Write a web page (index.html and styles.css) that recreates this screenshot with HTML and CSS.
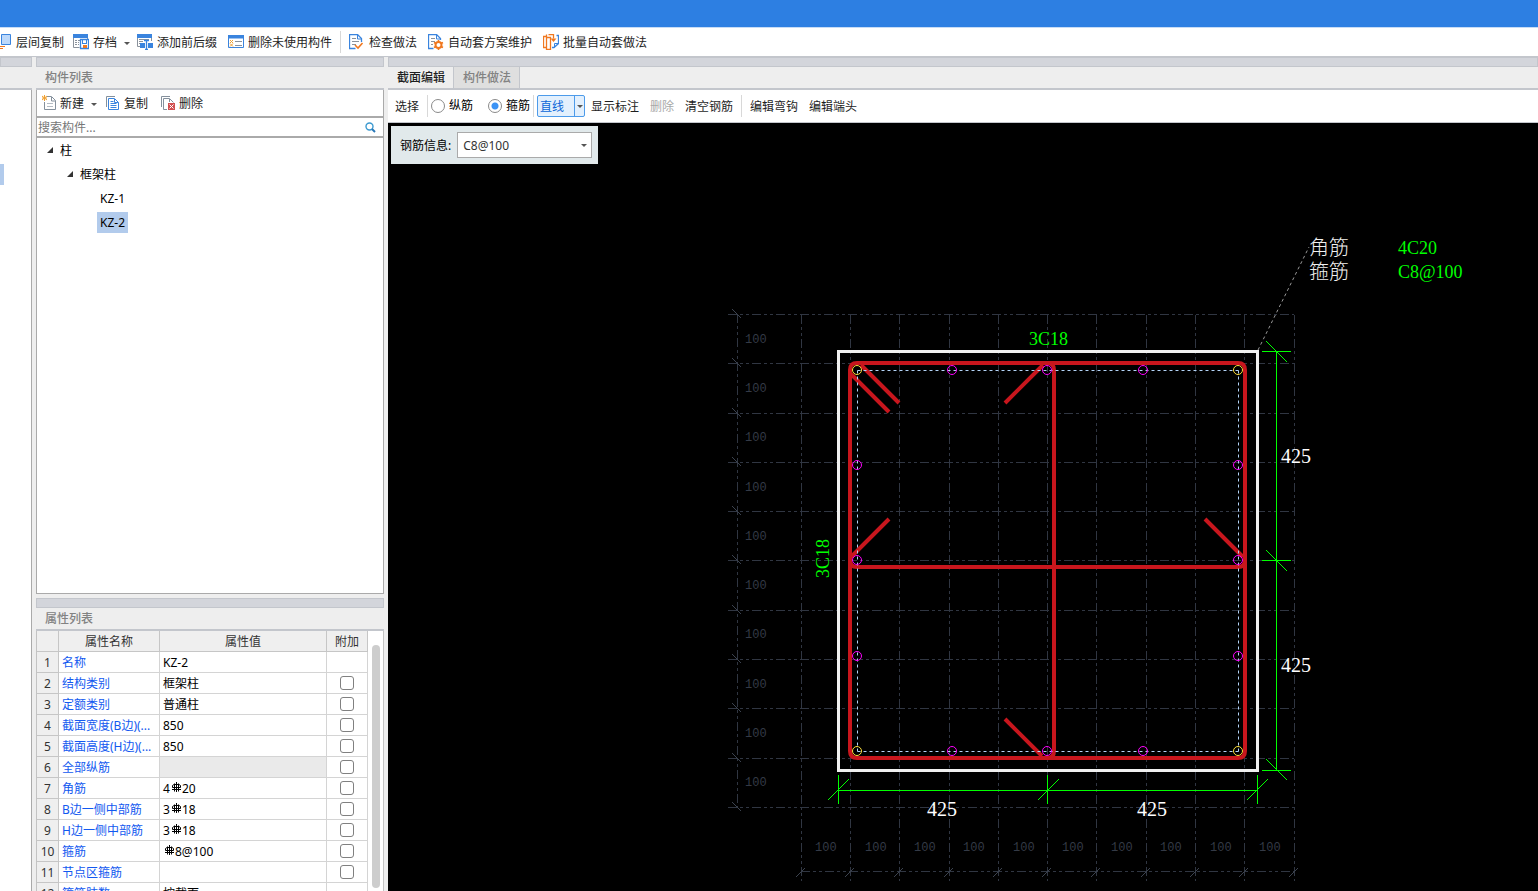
FILE: index.html
```html
<!DOCTYPE html>
<html lang="zh-CN">
<head>
    <meta charset="UTF-8">
    <meta name="viewport" content="width=device-width, initial-scale=1.0">
    <title>截面编辑</title>
    <link rel="stylesheet" href="styles.css">
</head>
<body>

    <header class="title-bar"></header>

    <nav class="main-toolbar">
        <button type="button" class="tool first">
            <svg width="12" height="16" viewBox="0 0 12 16"><path d="M1.500.5h9v10h-9z" fill="#bcd8fa" stroke="#3a84de"/><path d="M0 12.500h5M0 14.500h3" stroke="#f07820"/></svg>
            层间复制
        </button>
        <button type="button" class="tool has-arrow">
            <svg width="16" height="16" viewBox="0 0 16 16"><path d="M.5 1v12.500h6" fill="none" stroke="#8a929c"/><path d="M0 0h15v4H0z" fill="#3a84de"/><path d="M2 6.500h2M5 6.500h2M2 8.500h2M5 8.500h1M2 10.500h2M5 10.500h1M14.500 4v1" stroke="#8a929c"/><path d="M7.500 5.500h8v9h-8z" fill="#fff" stroke="#3a84de" stroke-width="1.300"/><path d="M9 9.500h5M9.500 6v3M13.500 6v3" stroke="#3a84de"/><path d="M10 11h4v3h-4z" fill="#f07820"/></svg>
            存档
            <span class="arrow"></span>
        </button>
        <button type="button" class="tool">
            <svg width="16" height="16" viewBox="0 0 16 16"><path d="M.5 3v9.500h3M14.500 3v4" fill="none" stroke="#8a929c"/><path d="M0 0h15v4H0z" fill="#3a84de"/><path d="M2 5.500h10M2 7.500h4M2 9.500h1" stroke="#8a929c"/><path d="M3 9h5v5H3zM11 9h5v5h-5z" fill="#3a84de"/><path d="M7 6.500h5M9.500 6v10M8 15.500h3" stroke="#3a84de" stroke-width="1.300"/></svg>
            添加前后缀
        </button>
        <button type="button" class="tool">
            <svg width="16" height="16" viewBox="0 0 16 16"><path d="M.5 1.500h15v12H.5z" fill="#fff" stroke="#3a84de"/><path d="M0 1h16v3.500H0z" fill="#3a84de"/><path d="M2 6l3 3M5 6L2 9M2 9.500l3 3M5 9.500l-3 3" stroke="#f0a030"/><path d="M7 7.500h7M7 11.500h7" stroke="#8a929c"/></svg>
            删除未使用构件
        </button>
        <span class="divider"></span>
        <button type="button" class="tool">
            <svg width="16" height="16" viewBox="0 0 16 16"><path d="M12.500 8V4.500l-4-4h-8v14h6" fill="none" stroke="#3a84de" stroke-width="1.300"/><path d="M8.500 1v4h4" fill="none" stroke="#3a84de"/><path d="M3 4.500h4M3 7.500h7M3 10.500h4" stroke="#8a929c"/><path d="M6 11l3 3 4.500-5" fill="none" stroke="#f07820" stroke-width="1.600"/></svg>
            检查做法
        </button>
        <button type="button" class="tool">
            <svg width="16" height="16" viewBox="0 0 16 16"><path d="M12.500 6V4.500l-4-4h-8v14h5" fill="none" stroke="#3a84de" stroke-width="1.300"/><path d="M8.500 1v4h4" fill="none" stroke="#3a84de"/><path d="M3 4.500h4M3 7.500h4M3 10.500h2" stroke="#8a929c"/><circle cx="10.500" cy="11" r="3" fill="#fff" stroke="#f07820" stroke-width="2"/><path d="M10.500 6v2M10.500 14v2M6 8.500l2 1M13 12.500l2 1M6 13.500l2-1M13 9.500l2-1" stroke="#f07820" stroke-width="1.600"/></svg>
            自动套方案维护
        </button>
        <button type="button" class="tool">
            <svg width="16" height="16" viewBox="0 0 16 16"><path d="M9 13.500h2l4.500-4v-8h-2" fill="none" stroke="#3a84de" stroke-width="1.300"/><path d="M11.500 13v-3.500h4" fill="none" stroke="#3a84de"/><path d="M3.500 2.500H.5v11h3M5.500.5h5v4M3.500.5v15h4V3.500h-4" fill="none" stroke="#f07820" stroke-width="1.300"/><path d="M7.500 4.500h6l-3 3.500z" fill="#f07820"/></svg>
            批量自动套做法
        </button>
    </nav>

    <main class="workspace">
        <aside class="side-strip">
            <div class="dock-grip"></div>
            <div class="panel-title"></div>
            <div class="strip-body"><div class="strip-mark"></div></div>
        </aside>

        <div class="middle">
            <section class="panel component-panel">
                <div class="dock-grip"></div>
                <h2 class="panel-title">构件列表</h2>
                <div class="panel-toolbar">
                    <button type="button" class="tool has-arrow">
                        <svg width="14" height="16" viewBox="0 0 14 16"><path d="M5 1.500h4.500l4 4v9h-11V7" fill="none" stroke="#84909c"/><path d="M9.500 2v4h4" fill="none" stroke="#84909c"/><path d="M5 8.500h6M5 11.500h6" stroke="#b4bcc4"/><path d="M0 1l5 4M5 1L0 5M2.500 0v6M0 3h5" stroke="#f0a030"/></svg>
                        新建
                        <span class="arrow"></span>
                    </button>
                    <button type="button" class="tool">
                        <svg width="14" height="16" viewBox="0 0 14 16"><path d="M.5 12V1.500H9" fill="none" stroke="#84909c"/><path d="M2.500 3.500h6l4 4v7h-10z" fill="#fff" stroke="#3a84de"/><path d="M8.500 4v3.500h4M4.500 6.500h3M4.500 8.500h6M4.500 10.500h6M4.500 12.500h6" fill="none" stroke="#3a84de"/></svg>
                        复制
                    </button>
                    <button type="button" class="tool">
                        <svg width="14" height="16" viewBox="0 0 14 16"><path d="M.5 12V1.500H9M6 14.500H2.500v-11h6l4 4" fill="none" stroke="#84909c"/><path d="M8.500 4v3" stroke="#84909c"/><path d="M7 8h7v7H7z" fill="#d25050"/><path d="M8.500 9.500l4 4M12.500 9.500l-4 4" stroke="#fff"/></svg>
                        删除
                    </button>
                </div>
                <div class="search">
                    <input type="text" class="search-input" placeholder="搜索构件..." aria-label="搜索构件">
                    <svg width="11" height="11" viewBox="0 0 11 11"><circle cx="4.500" cy="4.500" r="3.500" fill="none" stroke="#3c9ad0" stroke-width="1.400"/><path d="M7 7l3 3" stroke="#2a78b8" stroke-width="2"/></svg>
                </div>
                <ul class="tree">
                    <li class="node level-1"><svg width="7" height="7" viewBox="0 0 7 7"><path d="M6 0v6H0z" fill="#333"/></svg><span>柱</span></li>
                    <li class="node level-2"><svg width="7" height="7" viewBox="0 0 7 7"><path d="M6 0v6H0z" fill="#333"/></svg><span>框架柱</span></li>
                    <li class="node level-3"><span>KZ-1</span></li>
                    <li class="node level-3"><span class="selected">KZ-2</span></li>
                </ul>
            </section>

            <section class="panel property-panel">
                <div class="dock-grip"></div>
                <h2 class="panel-title">属性列表</h2>
                <div class="property-body">
                    <table class="properties">
                        <colgroup><col class="col-no"><col class="col-name"><col><col class="col-extra"></colgroup>
                        <thead>
                            <tr><th></th><th>属性名称</th><th>属性值</th><th>附加</th></tr>
                        </thead>
                        <tbody>
                            <tr><th>1</th><td class="name">名称</td><td>KZ-2</td><td></td></tr>
                            <tr><th>2</th><td class="name">结构类别</td><td>框架柱</td><td><input type="checkbox" aria-label="结构类别附加"></td></tr>
                            <tr><th>3</th><td class="name">定额类别</td><td>普通柱</td><td><input type="checkbox" aria-label="定额类别附加"></td></tr>
                            <tr><th>4</th><td class="name">截面宽度(B边)(...</td><td>850</td><td><input type="checkbox" aria-label="截面宽度附加"></td></tr>
                            <tr><th>5</th><td class="name">截面高度(H边)(...</td><td>850</td><td><input type="checkbox" aria-label="截面高度附加"></td></tr>
                            <tr><th>6</th><td class="name">全部纵筋</td><td class="disabled"></td><td><input type="checkbox" aria-label="全部纵筋附加"></td></tr>
                            <tr><th>7</th><td class="name">角筋</td><td>4<svg class="rebar" width="12" height="11" viewBox="0 0 12 11"><path d="M6.500 0v10M4.500 1.500v8M8.500 1.500v8M2 7.500h9M4 2.500h5l1.500 1v2H2.500v-2z"/></svg>20</td><td><input type="checkbox" aria-label="角筋附加"></td></tr>
                            <tr><th>8</th><td class="name">B边一侧中部筋</td><td>3<svg class="rebar" width="12" height="11" viewBox="0 0 12 11"><path d="M6.500 0v10M4.500 1.500v8M8.500 1.500v8M2 7.500h9M4 2.500h5l1.500 1v2H2.500v-2z"/></svg>18</td><td><input type="checkbox" aria-label="B边一侧中部筋附加"></td></tr>
                            <tr><th>9</th><td class="name">H边一侧中部筋</td><td>3<svg class="rebar" width="12" height="11" viewBox="0 0 12 11"><path d="M6.500 0v10M4.500 1.500v8M8.500 1.500v8M2 7.500h9M4 2.500h5l1.500 1v2H2.500v-2z"/></svg>18</td><td><input type="checkbox" aria-label="H边一侧中部筋附加"></td></tr>
                            <tr><th>10</th><td class="name">箍筋</td><td><svg class="rebar" width="12" height="11" viewBox="0 0 12 11"><path d="M6.500 0v10M4.500 1.500v8M8.500 1.500v8M2 7.500h9M4 2.500h5l1.500 1v2H2.500v-2z"/></svg>8@100</td><td><input type="checkbox" aria-label="箍筋附加"></td></tr>
                            <tr><th>11</th><td class="name">节点区箍筋</td><td></td><td><input type="checkbox" aria-label="节点区箍筋附加"></td></tr>
                            <tr><th>12</th><td class="name">箍筋肢数</td><td>按截面</td><td></td></tr>
                        </tbody>
                    </table>
                    <div class="scrollbar"><div class="thumb"></div></div>
                </div>
            </section>
        </div>

        <section class="editor">
            <div class="dock-grip"></div>
            <div class="tabs">
                <button type="button" class="tab active">截面编辑</button>
                <button type="button" class="tab">构件做法</button>
            </div>
            <div class="editor-toolbar">
                <button type="button" class="tool">选择</button>
                <span class="divider"></span>
                <label class="radio"><input type="radio" name="bar">纵筋</label>
                <label class="radio"><input type="radio" name="bar" checked>箍筋</label>
                <span class="divider"></span>
                <div class="split">
                    <button type="button" class="split-main">直线</button>
                    <button type="button" class="split-more" aria-label="更多"><span class="arrow"></span></button>
                </div>
                <button type="button" class="tool">显示标注</button>
                <button type="button" class="tool" disabled>删除</button>
                <button type="button" class="tool">清空钢筋</button>
                <span class="divider"></span>
                <button type="button" class="tool">编辑弯钩</button>
                <button type="button" class="tool">编辑端头</button>
            </div>

            <div class="canvas">
                <svg class="drawing" viewBox="388 123 1150 768" preserveAspectRatio="xMinYMin meet">
                    <!-- 100mm grid -->
                    <g class="grid">
                        <path d="M728 314.500H1294M728 363.500H1294M728 413.500H1294M728 462.500H1294M728 511.500H1294M728 560.500H1294M728 610.500H1294M728 659.500H1294M728 708.500H1294M728 758.500H1294M728 807.500H1294"/>
                        <path d="M801.500 315V881M850.500 315V881M899.500 315V881M949.500 315V881M998.500 315V881M1047.500 315V881M1096.500 315V881M1146.500 315V881M1195.500 315V881M1244.500 315V881M1294.500 315V881"/>
                        <path d="M737.500 314V807M801 871.500H1294"/>
                    </g>
                    <path class="ticks" d="M732 309l9 9M732 358l9 9M732 408l9 9M732 457l9 9M732 506l9 9M732 555l9 9M732 605l9 9M732 654l9 9M732 703l9 9M732 753l9 9M732 802l9 9M796 877l9-9M845 877l9-9M894 877l9-9M944 877l9-9M993 877l9-9M1042 877l9-9M1091 877l9-9M1141 877l9-9M1190 877l9-9M1239 877l9-9M1289 877l9-9"/>
                    <g class="grid-text">
                        <text x="745" y="343">100</text><text x="745" y="392">100</text><text x="745" y="441">100</text><text x="745" y="491">100</text><text x="745" y="540">100</text>
                        <text x="745" y="589">100</text><text x="745" y="638">100</text><text x="745" y="688">100</text><text x="745" y="737">100</text><text x="745" y="786">100</text>
                        <text x="815" y="851">100</text><text x="865" y="851">100</text><text x="914" y="851">100</text><text x="963" y="851">100</text><text x="1013" y="851">100</text>
                        <text x="1062" y="851">100</text><text x="1111" y="851">100</text><text x="1160" y="851">100</text><text x="1210" y="851">100</text><text x="1259" y="851">100</text>
                    </g>

                    <path class="outline" d="M838.500 351.500H1257.500V770.500H838.500z"/>

                    <!-- stirrups and hooks -->
                    <g class="stirrup">
                        <path d="M857 363H1238Q1245 363 1245 370V751Q1245 758 1238 758H857Q850 758 850 751V370Q850 363 857 363z"/>
                        <path d="M1047 363Q1054 363 1054 370V751Q1054 758 1047 758M850 560Q850 567 857 567H1238Q1245 567 1245 560"/>
                        <path d="M861 365L899 403M851 374L889 412M1043 365L1005 403M851 557L889 519M1243 557L1205 519M1042 756L1005 719"/>
                    </g>
                    <path class="guide" d="M857.500 370.500H1238.500M857.500 370.500V751.500M1238.500 370.500V751.500M857.500 751.500H1238.500"/>
                    <g class="bar corner">
                        <circle cx="857" cy="370" r="4.500"/><circle cx="1238" cy="370" r="4.500"/><circle cx="857" cy="751" r="4.500"/><circle cx="1238" cy="751" r="4.500"/>
                    </g>
                    <g class="bar">
                        <circle cx="952" cy="370" r="4.500"/><circle cx="1047" cy="370" r="4.500"/><circle cx="1143" cy="370" r="4.500"/>
                        <circle cx="952" cy="751" r="4.500"/><circle cx="1047" cy="751" r="4.500"/><circle cx="1143" cy="751" r="4.500"/>
                        <circle cx="857" cy="465" r="4.500"/><circle cx="857" cy="560" r="4.500"/><circle cx="857" cy="656" r="4.500"/>
                        <circle cx="1238" cy="465" r="4.500"/><circle cx="1238" cy="560" r="4.500"/><circle cx="1238" cy="656" r="4.500"/>
                    </g>

                    <!-- dimensions -->
                    <path class="dimension" d="M1276.500 351.500V770.500M1262 351.500H1291M1262 560.500H1291M1262 770.500H1291M1266 341l21 21M1266 550l21 21M1266 759l21 21M838.500 790.500H1257.500M838.500 775V804M1047.500 775V804M1257.500 775V804M828 800l21-21M1038 800l21-21M1247 800l21-21"/>
                    <g class="size-text">
                        <text x="927" y="816">425</text><text x="1137" y="816">425</text>
                        <text x="1281" y="463">425</text><text x="1281" y="672">425</text>
                    </g>
                    <path class="leader" d="M1258 350L1309 247"/>
                    <g class="label-text">
                        <text x="1309" y="255">角筋</text><text x="1309" y="279">箍筋</text>
                    </g>
                    <g class="bar-text">
                        <text x="1029" y="345">3C18</text>
                        <text transform="translate(829 578) rotate(-90)">3C18</text>
                        <text x="1398" y="254">4C20</text><text x="1398" y="278">C8@100</text>
                    </g>
                </svg>

                <div class="bar-info">
                    <label for="barInfo">钢筋信息:</label>
                    <div class="select-box">
                        <select id="barInfo"><option>C8@100</option></select>
                    </div>
                </div>
            </div>
        </section>
    </main>

</body>
</html>
```
FILE: styles.css
```css
* {
    box-sizing: border-box;
}
body {
    display: flex;
    flex-direction: column;
    height: 100vh;
    margin: 0;
    overflow: hidden;
    font: 12px/18px "Noto Sans", "Noto Sans CJK SC", sans-serif;
    color: #1e1e1e;
    background-color: #eee;
}
button, input, select {
    font: inherit;
    color: inherit;
    margin: 0;
}
svg {
    flex: none;
}
.title-bar {
    flex: none;
    height: 28px;
    background-color: #2d7fe2;
    border-bottom: 1px solid #c6dcf6;
}

/* Toolbars */
.main-toolbar {
    display: flex;
    flex: none;
    align-items: center;
    gap: 1px;
    height: 29px;
    background-color: #fff;
    border-bottom: 1px solid #c3c6cc;
}
.tool {
    display: flex;
    align-items: center;
    gap: 4px;
    height: 21px;
    padding: 2px 5px 0;
    border: none;
    background: none;
    white-space: nowrap;
}
.tool svg {
    margin-bottom: 2px;
}
.tool:disabled {
    color: #a8a8a8;
}
.tool.first {
    padding-left: 0;
    padding-right: 3px;
}
.tool.has-arrow {
    padding-right: 1px;
}
.arrow {
    border: 3px solid transparent;
    border-top-color: #555;
    border-bottom: none;
}
.has-arrow .arrow {
    margin-left: 3px;
}
.divider {
    width: 1px;
    height: 22px;
    margin: 0 2px;
    background-color: #d8d8d8;
}

/* Docked panels */
.workspace {
    display: flex;
    flex: 1;
    gap: 4px;
    min-height: 0;
}
.dock-grip {
    flex: none;
    height: 10px;
    background-color: #d3d5db;
    border: 1px solid #c3c6cc;
}
.panel-title {
    flex: none;
    height: 23px;
    margin: 0;
    padding: 0 9px;
    font-size: 12px;
    font-weight: 500;
    line-height: 22px;
    color: #828282;
    background-color: #eee;
    border-bottom: 2px solid #c3c6cc;
}
.side-strip {
    display: flex;
    flex: none;
    flex-direction: column;
    width: 32px;
}
.strip-body {
    flex: 1;
    padding-top: 74px;
    background-color: #fff;
    border-right: 1px solid #aaa;
}
.strip-mark {
    width: 4px;
    height: 21px;
    background-color: #b2cbec;
}
.middle {
    display: flex;
    flex: none;
    flex-direction: column;
    gap: 4px;
    width: 348px;
}
.panel {
    display: flex;
    flex-direction: column;
    min-height: 0;
}
.component-panel {
    flex: 1;
    background-color: #fff;
    border-bottom: 1px solid #aaa;
}
.property-panel {
    flex: none;
    height: 293px;
}
.panel-toolbar {
    display: flex;
    flex: none;
    align-items: center;
    gap: 3px;
    height: 26px;
    border: solid #aaa;
    border-width: 0 1px;
}
.search {
    display: flex;
    flex: none;
    align-items: center;
    height: 22px;
    padding-right: 7px;
    border: 2px solid #aaa;
    border-width: 2px 1px;
}
.search-input {
    flex: 1;
    min-width: 0;
    height: 18px;
    padding: 2px 1px 0;
    border: none;
    outline: none;
}
.search-input::placeholder {
    color: #777;
}
.tree {
    flex: 1;
    margin: 0;
    padding: 0;
    list-style: none;
    color: #000;
    border: solid #aaa;
    border-width: 0 1px;
}
.node {
    display: flex;
    align-items: center;
    height: 24px;
}
.node span {
    padding: 2px 3px 1px;
}
.node svg {
    margin-right: 3px;
}
.level-1 {
    padding-left: 10px;
}
.level-2 {
    padding-left: 30px;
}
.level-3 {
    padding-left: 60px;
}
.node .selected {
    background-color: #b2cbec;
}

/* Property table */
.property-body {
    display: flex;
    flex: 1;
    min-height: 0;
    overflow: hidden;
    background-color: #fff;
    border-left: 1px solid #c3c3c3;
    border-right: 1px solid #c3c3c3;
}
.properties {
    flex: 1;
    align-self: flex-start;
    table-layout: fixed;
    width: 100%;
    border-collapse: separate;
    border-spacing: 0;
    color: #000;
}
.col-no {
    width: 22px;
}
.col-name {
    width: 101px;
}
.col-extra {
    width: 41px;
}
.properties th,
.properties td {
    height: 21px;
    padding: 2px 3px 0;
    overflow: hidden;
    white-space: nowrap;
    line-height: 18px;
    border: solid #d4d4d4;
    border-width: 0 1px 1px 0;
}
.properties th {
    padding: 2px 0 0;
    font-weight: normal;
    color: #333;
    background-color: #efefef;
    border-color: #c6c6c6;
}
.properties .name {
    padding-right: 0;
    color: #1259f0;
}
.properties .disabled {
    background-color: #eaeaea;
}
.properties td:last-child {
    padding-top: 0;
}
.properties input {
    appearance: none;
    display: block;
    width: 14px;
    height: 14px;
    margin: 0 auto;
    background-color: #fff;
    border: 1px solid #808080;
    border-radius: 3px;
}
.rebar {
    fill: none;
    stroke: #000;
}
.scrollbar {
    flex: none;
    width: 15px;
    padding: 14px 3px 3px 4px;
}
.thumb {
    height: 100%;
    background-color: #cdcdcd;
    border-radius: 4px;
}

/* Section editor */
.editor {
    display: flex;
    flex: 1;
    flex-direction: column;
    min-width: 0;
}
.tabs {
    display: flex;
    flex: none;
    height: 23px;
    border-bottom: 2px solid #c3c6cc;
}
.tab {
    padding: 0 8px 0 9px;
    color: #828282;
    font-weight: 500;
    background-color: #dfdfdf;
    border: none;
    border-right: 1px solid #c3c6cc;
}
.tab.active {
    color: #1e1e1e;
    background-color: #eee;
}
.editor-toolbar {
    display: flex;
    flex: none;
    align-items: center;
    gap: 1px;
    height: 33px;
    padding-left: 2px;
    background-color: #fff;
    border-bottom: 1px solid #c3c6cc;
}
.radio {
    display: flex;
    align-items: center;
    gap: 4px;
    color: #000;
}
.radio + .radio {
    margin-left: 14px;
}
.radio input {
    appearance: none;
    width: 14px;
    height: 14px;
    border: 1px solid #8a8a8a;
    border-radius: 50%;
}
.radio input:checked {
    background: radial-gradient(circle, #3b93f5 3px, #fff 4px);
}
.split {
    display: flex;
    width: 48px;
    height: 22px;
    background-color: #e3f0fd;
    border: 1px solid #4d9bea;
    border-radius: 2px;
}
.split button {
    padding: 2px 2px 0;
    color: #0a66d8;
    text-align: left;
    background: none;
    border: none;
}
.split-main {
    flex: 1;
}
.split .split-more {
    display: flex;
    align-items: center;
    justify-content: center;
    width: 10px;
    padding: 0;
    border-left: 1px solid #4d9bea;
}
.canvas {
    position: relative;
    flex: 1;
    min-height: 0;
    background-color: #000;
}
.drawing {
    display: block;
    width: 100%;
    height: 100%;
}
.bar-info {
    position: absolute;
    top: 3px;
    left: 3px;
    display: flex;
    align-items: center;
    gap: 6px;
    padding: 6px;
    padding-left: 9px;
    color: #000;
    background-color: #e1e9eb;
}
.bar-info label {
    padding-top: 2px;
}
.select-box {
    position: relative;
}
.select-box select {
    appearance: none;
    display: block;
    width: 135px;
    height: 26px;
    padding: 2px 5px 0;
    color: #333;
    background-color: #fff;
    border: 1px solid #aaa;
    border-radius: 0;
}
.select-box::after {
    content: "";
    position: absolute;
    top: 12px;
    right: 5px;
    border: 3px solid transparent;
    border-top-color: #555;
    border-bottom: none;
}

/* Drawing */
.drawing path,
.drawing circle {
    fill: none;
    stroke-width: 1;
}
.grid path {
    stroke: #303642;
    stroke-dasharray: 9 3 3 3 3 3;
}
.drawing .ticks {
    stroke: #3c434f;
}
.grid-text {
    font-family: "Liberation Mono", monospace;
    font-size: 12px;
    fill: #343a46;
}
.drawing .outline {
    stroke: #f0f0f0;
    stroke-width: 3;
}
.drawing .stirrup path {
    stroke: #c8161d;
    stroke-width: 4;
}
.drawing .guide {
    stroke: #b4d4f8;
    stroke-dasharray: 3 3;
}
.bar {
    stroke: #f0f;
}
.bar.corner {
    stroke: #ffe13c;
}
.drawing .dimension {
    stroke: #0f0;
}
.drawing .leader {
    stroke: #999;
    stroke-dasharray: 3 3;
}
.size-text {
    font-family: "Liberation Serif", serif;
    font-size: 20px;
    fill: #fff;
}
.label-text {
    font-family: "Noto Sans CJK SC", sans-serif;
    font-size: 20px;
    font-weight: 300;
    fill: #f0f0f0;
}
.bar-text {
    font-family: "Liberation Serif", serif;
    font-size: 18px;
    fill: #0f0;
}
```
